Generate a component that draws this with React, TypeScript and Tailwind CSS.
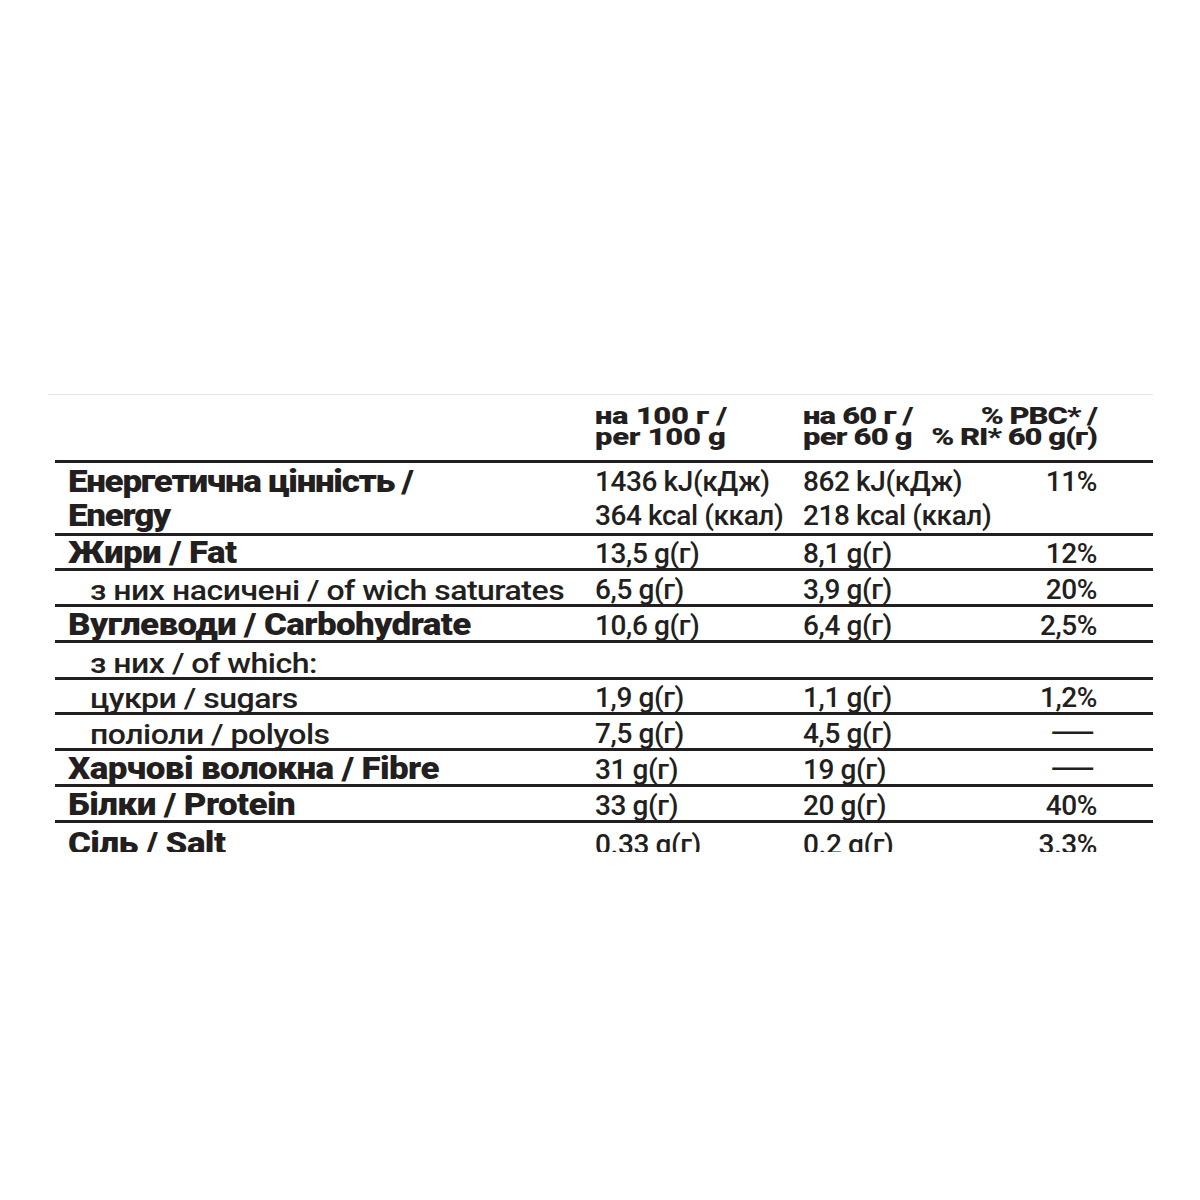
import React from "react";

type Row = {
  label: React.ReactNode;
  sub?: boolean;
  per100: React.ReactNode;
  per60: React.ReactNode;
  ri?: React.ReactNode;
  h: string;
};

const dash = <span className="inline-block scale-x-[2.2] origin-right pr-[1px]">—</span>;

const rows: Row[] = [
  { label: "Жири / Fat", per100: "13,5 g(г)", per60: "8,1 g(г)", ri: "12%", h: "h-[35px]" },
  { label: "з них насичені / of wich saturates", sub: true, per100: "6,5 g(г)", per60: "3,9 g(г)", ri: "20%", h: "h-[36px]" },
  { label: "Вуглеводи / Carbohydrate", per100: "10,6 g(г)", per60: "6,4 g(г)", ri: "2,5%", h: "h-[36px]" },
  { label: "з них / of which:", sub: true, per100: "", per60: "", h: "h-[37px]" },
  { label: "цукри / sugars", sub: true, per100: "1,9 g(г)", per60: "1,1 g(г)", ri: "1,2%", h: "h-[35px]" },
  { label: "поліоли / polyols", sub: true, per100: "7,5 g(г)", per60: "4,5 g(г)", ri: dash, h: "h-[36px]" },
  { label: "Харчові волокна / Fibre", per100: "31 g(г)", per60: "19 g(г)", ri: dash, h: "h-[36px]" },
  { label: "Білки / Protein", per100: "33 g(г)", per60: "20 g(г)", ri: "40%", h: "h-[36px]" },
];

const grid =
  "grid grid-cols-[527px_208px_minmax(0,1fr)_170px] grid-rows-[minmax(0,1fr)] items-end pl-[13px] pr-[56px]";
const line = "border-b-[3px] border-[#231f20]";
const bold = "origin-bottom-left scale-y-[0.88] text-[35px] font-black tracking-[-0.6px] leading-none whitespace-nowrap";
const sub = "origin-bottom-left scale-y-[0.875] pl-[22px] text-[32px] font-medium tracking-[-0.5px] leading-none whitespace-nowrap";
const reg = "text-[28px] font-medium tracking-[-0.4px] leading-none whitespace-nowrap";

function NutritionRow({ r, last }: { r: Row; last?: boolean }) {
  return (
    <div className={`${grid} ${r.h} ${last ? "" : line}`}>
      <div className={r.sub ? sub : bold}>{r.label}</div>
      <div className={reg}>{r.per100}</div>
      <div className={reg}>{r.per60}</div>
      <div className={`${reg} text-right`}>{r.ri}</div>
    </div>
  );
}

export default function App() {
  return (
    <div
      className="min-h-[1200px] bg-white pt-[394px] pl-[48px] text-[#231f20]"
      style={{ fontFamily: "Roboto, 'Liberation Sans', sans-serif" }}
    >
      <div className="w-[1105px] border-t border-[#e4e4e4]">
        <div className="ml-[7px]">
          {/* header */}
          <div className={`${grid} h-[68px] ${line} pb-[13px]`}>
            <div />
            <div className="origin-bottom scale-y-[0.78] text-[31px] font-black leading-[26px] tracking-[-0.3px] whitespace-nowrap">
              <div>на 100 г /</div>
              <div>per 100 g</div>
            </div>
            <div className="origin-bottom scale-y-[0.78] text-[31px] font-black leading-[26px] tracking-[-0.8px] whitespace-nowrap">
              <div>на 60 г /</div>
              <div>per 60 g</div>
            </div>
            <div className="origin-bottom scale-y-[0.78] text-right text-[31px] font-black leading-[26px] tracking-[-1px] whitespace-nowrap">
              <div>% РВС* /</div>
              <div>% RI* 60 g(г)</div>
            </div>
          </div>

          {/* energy */}
          <div className={`${grid} h-[73px] ${line}`}>
            <div className="origin-bottom-left scale-y-[0.88] text-[35px] font-black leading-[39px] tracking-[-1.3px] whitespace-nowrap">
              <div>Енергетична цінність /</div>
              <div>Energy</div>
            </div>
            <div className="text-[28px] font-medium leading-[34px] tracking-[-0.4px] whitespace-nowrap">
              <div>1436 kJ(кДж)</div>
              <div>364 kcal (ккал)</div>
            </div>
            <div className="text-[28px] font-medium leading-[34px] tracking-[-0.4px] whitespace-nowrap">
              <div>862 kJ(кДж)</div>
              <div>218 kcal (ккал)</div>
            </div>
            <div className="text-right text-[28px] font-medium leading-[34px] tracking-[-0.4px]">
              <div>11%</div>
              <div>&nbsp;</div>
            </div>
          </div>

          {rows.map((r, i) => (
            <NutritionRow key={i} r={r} />
          ))}

          {/* salt, cut off at the bottom of the picture */}
          <div className="h-[29px] overflow-hidden">
            <NutritionRow
              last
              r={{ label: "Сіль / Salt", per100: "0.33 g(г)", per60: "0.2 g(г)", ri: "3.3%", h: "h-[36px]" }}
            />
          </div>
        </div>
      </div>
    </div>
  );
}
